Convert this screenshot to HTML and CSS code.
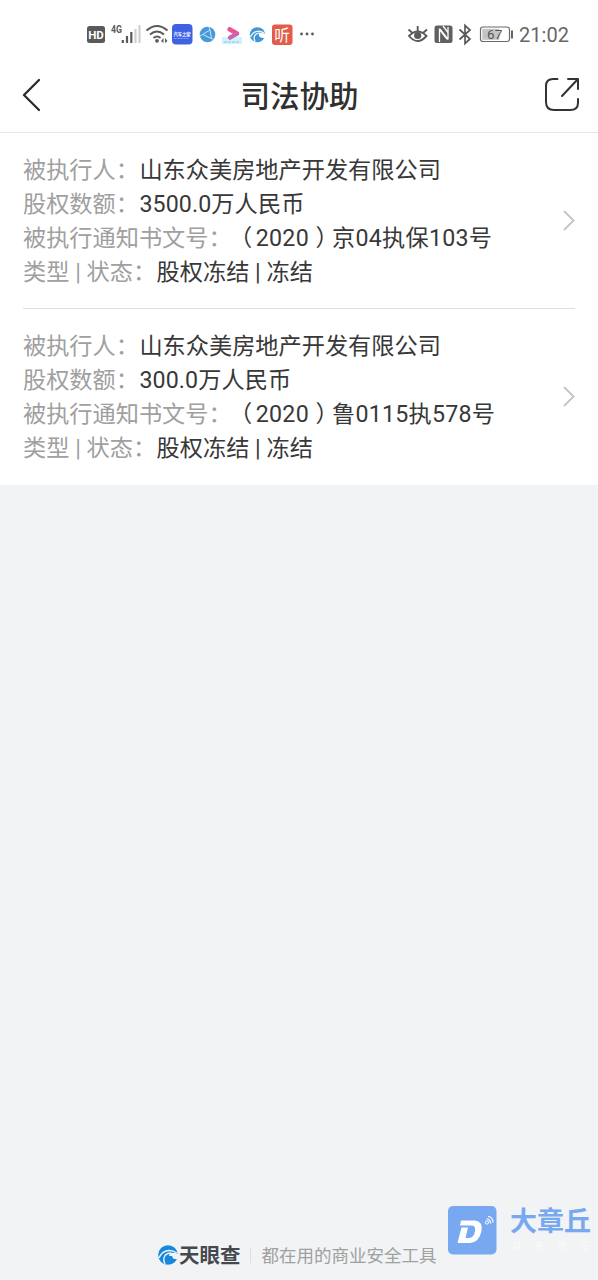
FILE: index.html
```html
<!DOCTYPE html>
<html lang="zh-CN">
<head>
<meta charset="utf-8">
<title>司法协助</title>
<link rel="stylesheet" href="styles.css">
</head>
<body>
<div class="status">
  <svg class="status-icons" width="598" height="69" viewBox="0 0 598 69">
    <rect x="87" y="26" width="18" height="17" rx="2.5" fill="#5a5a5a"/>
    <text class="hd" x="96" y="39" text-anchor="middle">HD</text>
    <text class="net" x="111" y="33" textLength="11" lengthAdjust="spacingAndGlyphs">4G</text>
    <path d="M122.8 40v3M127 36v7M131.3 32v11" stroke="#5a5a5a" stroke-width="2.2"/>
    <path d="M135.5 29v14M139.5 25v18" stroke="#d0d0d0" stroke-width="2.2"/>
    <g fill="none" stroke="#5a5a5a" stroke-width="2">
      <path d="M146.500 30.500q10.500-9 21 0M150 34.500q7-6 14 0M153.500 38q3.500-3 7 0"/>
    </g>
    <circle cx="157" cy="40.800" r="1.900" fill="#5a5a5a"/>
    <path d="M161 41l2.500-3v5zM167.500 41l-2.500-3v5z" fill="#5a5a5a"/>
    <rect x="172" y="24" width="20.500" height="20.500" rx="4" fill="#3f62e5"/>
    <text class="car" x="182" y="36" text-anchor="middle" textLength="17" lengthAdjust="spacingAndGlyphs">汽车之家</text>
    <path d="M174.500 38.500h15" stroke="#8ba0f3" stroke-width="1.200" stroke-dasharray="2 1"/>
    <circle cx="207.500" cy="34.500" r="7.800" fill="#4799d8"/>
    <path d="M202.500 34.500l7.500-4.500 1.500 8.500zM202.500 34.500l-2.500 1.500M210 30l-1-3M211.500 38.500l2 1" stroke="#c3e7fa" stroke-width="1" fill="none"/>
    <path d="M222 37h20v7h-20z" fill="#d2f1f8"/>
    <path d="M229.500 29.300l7.500 4.200" stroke="#ed5292" stroke-width="4.500" stroke-linecap="round"/>
    <path d="M230 37.700l6.500-3.700" stroke="#c565b4" stroke-width="4.200" stroke-linecap="round"/>
    <path d="M224 42h16" stroke="#a5ddec" stroke-width="2" stroke-dasharray="3 1"/>
    <g transform="translate(249.700 27) scale(.77)">
      <circle cx="10" cy="10" r="9.800" fill="#4295d5"/>
      <path d="M1 13C4 6 11 3 19 8M7 19C4 13 7 8 13 8" fill="none" stroke="#e6f3fb" stroke-width="1.700"/>
      <path d="M12 8q4-1 8 1v5q-5 1-8-2z" fill="#fff"/>
    </g>
    <rect x="272" y="24.500" width="20.500" height="20.500" rx="3" fill="#e35c49"/>
    <text class="listen" x="282" y="40.500" text-anchor="middle">听</text>
    <g fill="#5a5a5a"><circle cx="301.500" cy="34" r="1.400"/><circle cx="307" cy="34" r="1.400"/><circle cx="312.500" cy="34" r="1.400"/></g>
    <g fill="none" stroke="#5a5a5a" stroke-width="1.900">
      <path d="M409 36q8.700-9 17.500 0-8.800 10-17.500 0zM408.500 29.500l4 3.500M417.700 26v4.500M427 29.500l-4 3.500"/>
    </g>
    <circle cx="417.700" cy="35.500" r="3.600" fill="#5a5a5a"/>
    <rect x="434.500" y="25.500" width="18" height="17.500" rx="2.500" fill="#606060"/>
    <path d="M439.500 42V29.500l7.500 9.500M448 27v12.500M448 39.500L440 29" fill="none" stroke="#fff" stroke-width="1.300"/>
    <path d="M443 26l5 6.500" stroke="#fff" stroke-width="1.300"/>
    <path d="M459.500 29.500l10.500 9.500-5 4.500v-18l5 4.500-10.500 9.500" fill="none" stroke="#5a5a5a" stroke-width="1.700"/>
    <rect x="480.500" y="27" width="29" height="14.500" rx="2.500" fill="#fff" stroke="#6b6b6b" stroke-width="1.200"/>
    <rect x="482.300" y="28.800" width="17" height="11" fill="#c4c4c4"/>
    <rect x="511" y="30.500" width="2" height="8" fill="#666"/>
    <text class="battery" x="494.700" y="39.200" text-anchor="middle">67</text>
    <text class="clock" x="519" y="42" textLength="50">21:02</text>
  </svg>
</div>
<header class="header">
  <svg width="20" height="34" viewBox="0 0 20 34"><path d="M19 2L4 17l15 15" fill="none" stroke="#2c2c2c" stroke-width="2.300" stroke-linecap="round" stroke-linejoin="round"/></svg>
  <h1 class="title">司法协助</h1>
  <svg width="36" height="36" viewBox="0 0 36 36"><path d="M12.500 2H8Q1 2 1 9v16q0 8 8 8h16q8 0 8-7v-4M23 2h10v10M32.500 2.500L17 19" fill="none" stroke="#333" stroke-width="2" stroke-linecap="round" stroke-linejoin="round"/></svg>
</header>
<main class="list">
  <section class="item">
    <div class="lines">
      <p class="line"><span class="label">被执行人<span class="colon">：</span></span>山东众美房地产开发有限公司</p>
      <p class="line"><span class="label">股权数额<span class="colon">：</span></span><span class="amount">3500.0万人民币</span></p>
      <p class="line"><span class="label">被执行通知书文号<span class="colon">：</span></span><span class="open">（</span><span class="value">2020</span><span class="close">）</span><span class="value">京04执保103号</span></p>
      <p class="line"><span class="label">类型 | 状态<span class="colon">：</span></span>股权冻结 | 冻结</p>
    </div>
    <svg class="chevron" width="14" height="24" viewBox="0 0 14 24"><path d="M2 3l9.500 9.500L2 22" fill="none" stroke="#c6c6c6" stroke-width="2"/></svg>
  </section>
  <section class="item">
    <div class="lines">
      <p class="line"><span class="label">被执行人<span class="colon">：</span></span>山东众美房地产开发有限公司</p>
      <p class="line"><span class="label">股权数额<span class="colon">：</span></span><span class="amount">300.0万人民币</span></p>
      <p class="line"><span class="label">被执行通知书文号<span class="colon">：</span></span><span class="open">（</span><span class="value">2020</span><span class="close">）</span><span class="value">鲁0115执578号</span></p>
      <p class="line"><span class="label">类型 | 状态<span class="colon">：</span></span>股权冻结 | 冻结</p>
    </div>
    <svg class="chevron" width="14" height="24" viewBox="0 0 14 24"><path d="M2 3l9.500 9.500L2 22" fill="none" stroke="#c6c6c6" stroke-width="2"/></svg>
  </section>
</main>
<footer class="footer">
  <svg width="20" height="20" viewBox="0 0 20 20"><circle cx="10" cy="10" r="9.800" fill="#1688dd"/><path d="M1 13C4 6 11 3 19 8M7 19C4 13 7 8 13 8" fill="none" stroke="#f1f3f5" stroke-width="1.400"/><path d="M12 8q4-1 8 1v5q-2 .5-5-.5l-1-2.500-3 0z" fill="#f1f3f5"/></svg>
  <span class="brand">天眼查</span>
  <span class="rule"></span>
  <span class="slogan">都在用的商业安全工具</span>
</footer>
<aside class="watermark">
  <svg width="49" height="49" viewBox="0 0 49 49"><rect width="48.500" height="48.500" rx="5" fill="#78a8f0"/><path d="M13 14.500h14q8 1 6.500 10.500Q31 36.500 22 37H9.500l4-15.500h6.500L17.500 32h3.500q5 0 6-7 1-5.500-3.500-5.500H12z" fill="#fff"/><circle cx="39" cy="16.500" r="1.600" fill="none" stroke="#fff"/><path d="M38.500 13q4 0 4 4.500M40 10.500q5 .5 5 6" fill="none" stroke="#fff" stroke-width="1.200"/></svg>
  <div class="mark-text">
    <span class="mark-name">大章丘</span>
    <div class="mark-sub"><span>自</span><span>天</span><span>然</span><span>在</span></div>
  </div>
</aside>
</body>
</html>
```
FILE: styles.css
```css
* { box-sizing: border-box; }
body {
  margin: 0;
  width: 598px;
  height: 1280px;
  position: relative;
  overflow: hidden;
  display: flex;
  flex-direction: column;
  background: #f1f3f5;
  color: #383838;
  font-family: Roboto, "Noto Sans CJK SC", sans-serif;
  text-spacing-trim: space-all;
}
svg { display: block; flex: none; }
.status { height: 58px; background: #fff; overflow: hidden; }
.hd { font: 700 11.5px Roboto, sans-serif; fill: #fff; }
.net { font: 700 10px Roboto, sans-serif; fill: #5a5a5a; }
.car { font: 700 5px "Noto Sans CJK SC", sans-serif; fill: #fff; }
.listen { font: 400 15.5px "Noto Sans CJK SC", sans-serif; fill: #fff; }
.battery { font: 400 13.5px Roboto, sans-serif; fill: #555; }
.clock { font: 400 20px Roboto, sans-serif; fill: #666; }
.header {
  height: 75px;
  padding: 0 17px 0 20px;
  display: flex;
  align-items: center;
  justify-content: space-between;
  background: #fff;
  border-bottom: 1px solid #e6e6e6;
}
.title { margin: 4px 0 0 14px; font-size: 29.5px; font-weight: 500; line-height: 40px; color: #2f2f2f; }
.list { background: #fff; height: 351.500px; padding: 0 23px; }
.item {
  height: 176px;
  padding-top: 20px;
  display: flex;
  justify-content: space-between;
}
.item:first-child { border-bottom: 1px solid #dedede; }
.line {
  margin: 0;
  height: 34px;
  line-height: 34px;
  font-size: 23.200px;
  white-space: nowrap;
}
.label { color: #a0a0a0; margin-right: .5px; }
.value { letter-spacing: .25px; }
.amount { letter-spacing: .1px; }
.open, .close { font-feature-settings: "halt"; }
.open { margin: 0 3.500px 0 8.500px; }
.close { margin: 0 5px 0 6.500px; }
.chevron { margin: 55px -1px 0 0; }
.footer {
  margin-top: auto;
  height: 50px;
  padding-left: 158px;
  display: flex;
  align-items: center;
}
.brand { margin: 1px 0 0 1px; font-size: 20.500px; font-weight: 700; color: #45494f; line-height: 24px; }
.rule { width: 1px; height: 15px; margin: 0 11px 0 9px; background: #dedfe1; }
.slogan { font-size: 17.500px; color: #a0a0a0; line-height: 24px; margin-top: 2px; }
.watermark {
  position: absolute;
  left: 448px;
  top: 1206px;
  display: flex;
  gap: 13px;
}
.mark-text { display: flex; flex-direction: column; width: 82px; white-space: nowrap; }
.mark-name { font-size: 27px; line-height: 32px; font-weight: 700; color: #78a8f0; }
.mark-sub {
  display: flex;
  justify-content: space-between;
  padding: 0 3px 0 2px;
  font-size: 9px;
  line-height: 16px;
  color: #fafbfc;
}
```
